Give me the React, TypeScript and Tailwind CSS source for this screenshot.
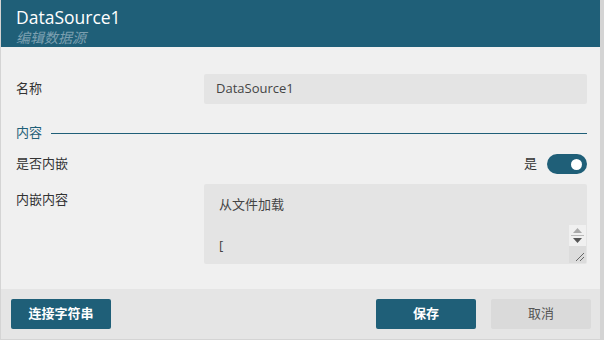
import React from "react";

const font = { fontFamily: '"Open Sans", "Noto Sans CJK SC", sans-serif' };

export default function App() {
  return (
    <div className="w-[604px] h-[340px] bg-[#d4d4d4] overflow-hidden" style={font}>
      <div className="ml-[1px] w-[599px] h-[339px] bg-[#f0f0f0] flex flex-col">
        {/* header */}
        <div className="h-[47px] shrink-0 bg-[#1f5f78] pl-[15px] pt-[6px] flex flex-col overflow-hidden">
          <div className="text-white text-[17.5px] leading-[22px]">DataSource1</div>
          <div className="text-[#7c9fb0] text-[14px] leading-[18px] italic mt-[1px]">编辑数据源</div>
        </div>
        {/* body */}
        <div className="flex-1 flex flex-col pl-[15px] pr-[13px]">
          <div className="mt-[27px] flex items-center h-[30px]">
            <div className="w-[188px] text-[13px] text-[#333]">名称</div>
            <div className="flex-1 h-[30px] bg-[#e4e4e4] rounded-[2px] flex items-center pl-[12px] text-[13px] text-[#444]">
              DataSource1
            </div>
          </div>
          <div className="mt-[20px] flex items-center h-[18px]">
            <div className="text-[13px] text-[#1f5f78]">内容</div>
            <div className="flex-1 h-[1.5px] bg-[#1f5f78] ml-[9px] mt-[1px]"></div>
          </div>
          <div className="mt-[11px] flex items-center h-[22px]">
            <div className="flex-1 text-[13px] text-[#333]">是否内嵌</div>
            <div className="text-[13px] text-[#333] mr-[10px]">是</div>
            <div className="w-[40px] h-[20px] rounded-full bg-[#1f5f78] flex items-center justify-end pr-[5px]">
              <div className="w-[11px] h-[11px] rounded-full bg-white"></div>
            </div>
          </div>
          <div className="mt-[9px] flex">
            <div className="w-[188px] text-[13px] text-[#333] pt-[6px]">内嵌内容</div>
            <div className="flex-1 h-[80px] bg-[#e4e4e4] rounded-[2px] relative pl-[15px] pt-[10px] text-[13px] text-[#444] leading-[20px]">
              <div>从文件加载</div>
              <div className="mt-[21px]">[</div>
              <div className="absolute right-[1px] top-[41px] w-[17px] flex flex-col">
                <div className="h-[21px] bg-[#f0f0f0] flex flex-col items-center justify-center gap-[2px]">
                  <svg width="9" height="5" viewBox="0 0 9 5"><path d="M0 5 L4.5 0 L9 5 Z" fill="#aaa" /></svg>
                  <div className="w-[13px] h-[1px] bg-[#bbb]"></div>
                  <svg width="9" height="5" viewBox="0 0 9 5"><path d="M0 0 L4.5 5 L9 0 Z" fill="#555" /></svg>
                </div>
                <div className="h-[17px] bg-[#dcdcdc] relative">
                  <svg className="absolute right-[1px] bottom-[1px]" width="10" height="10" viewBox="0 0 10 10">
                    <path d="M1 9 L9 1 M5 9 L9 5" stroke="#666" strokeWidth="1" />
                  </svg>
                </div>
              </div>
            </div>
          </div>
        </div>
        {/* footer */}
        <div className="h-[50px] bg-[#e5e5e5] flex items-center pl-[10px] pr-[9px]">
          <button className="w-[100px] h-[30px] bg-[#1f5f78] rounded-[2px] text-white text-[13px] font-semibold">连接字符串</button>
          <div className="flex-1"></div>
          <button className="w-[100px] h-[30px] bg-[#1f5f78] rounded-[2px] text-white text-[13px] font-semibold">保存</button>
          <button className="ml-[15px] w-[100px] h-[30px] bg-[#dadada] rounded-[2px] text-[#555] text-[13px]">取消</button>
        </div>
      </div>
    </div>
  );
}
